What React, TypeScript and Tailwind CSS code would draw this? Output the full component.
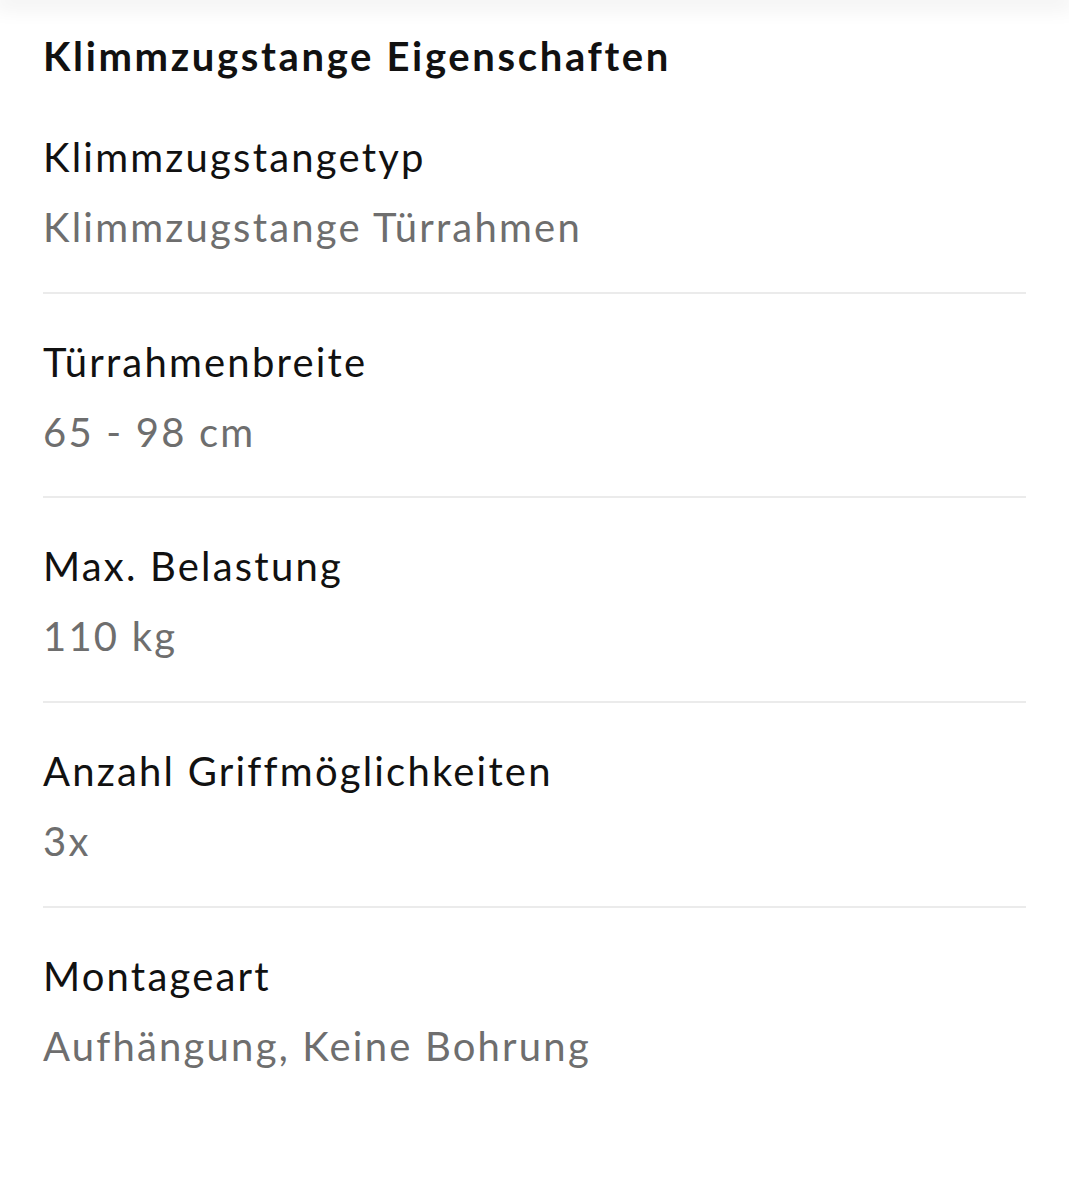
import React from 'react';

interface Property {
  label: string;
  value: string;
}

const properties: Property[] = [
  { label: 'Klimmzugstangetyp', value: 'Klimmzugstange Türrahmen' },
  { label: 'Türrahmenbreite', value: '65 - 98 cm' },
  { label: 'Max. Belastung', value: '110 kg' },
  { label: 'Anzahl Griffmöglichkeiten', value: '3x' },
  { label: 'Montageart', value: 'Aufhängung, Keine Bohrung' },
];

export default function App() {
  return (
    <div className="min-h-[1200px] w-full bg-white font-['Lato',sans-serif]">
      {/* top shadow of the header above */}
      <div className="h-0 w-full shadow-[0_0_22px_6px_rgba(0,0,0,0.09)]" />
      <section className="px-[43px] pt-[32px]">
        <h2 className="text-[40px] leading-[48px] font-bold text-[#111111] tracking-[2.65px]">
          Klimmzugstange Eigenschaften
        </h2>
        <div className="mt-[9px]">
          {properties.map((p, i) => (
            <div
              key={p.label}
              className={
                i < properties.length - 1
                  ? 'pt-[33px] pb-[29.7px] border-b-2 border-[#ebebeb]'
                  : 'pt-[33px] pb-[29.7px]'
              }
            >
              <div className="text-[40px] leading-[70px] tracking-[2.2px] text-[#111111]">{p.label}</div>
              <div className="text-[40px] leading-[70px] tracking-[2.2px] text-[#6e6e6e]">{p.value}</div>
            </div>
          ))}
        </div>
      </section>
    </div>
  );
}
